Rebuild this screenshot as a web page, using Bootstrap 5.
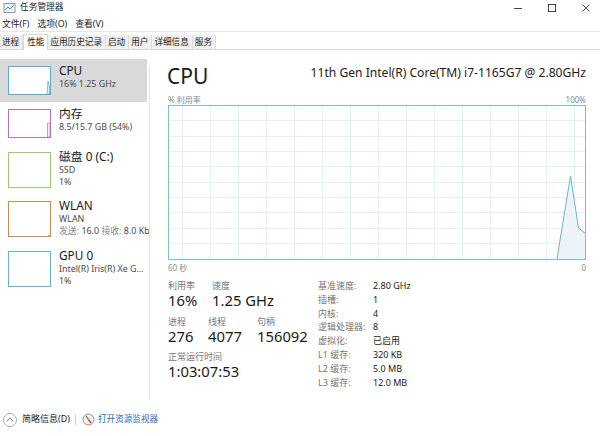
<!DOCTYPE html>
<html lang="zh-CN">
<head>
  <meta charset="UTF-8">
  <meta name="viewport" content="width=device-width, initial-scale=1.0">
  <title>任务管理器</title>
  <link href="https://cdn.jsdelivr.net/npm/bootstrap@5.3.0/dist/css/bootstrap.min.css" rel="stylesheet">
  <style>
    html, body { height: 100%; }
    body {
      width: 600px; height: 436px; overflow: hidden; background: #fff; color: #1a1a1a;
      font-family: "Noto Sans", "Noto Sans CJK SC", sans-serif; font-size: 9px; line-height: 1.2;
    }
    .title-row { height: 15px; padding-left: 3px; font-size: 8.7px; }
    .win-btns { gap: 26px; padding-right: 10px; }
    .menu-row { height: 17px; padding: 3px 0 0 2px; gap: 8px; font-size: 8.8px; border-bottom: 1px solid #e8e8e8; margin-bottom: 3px; }
    .tab-row { height: 15px; border-bottom: 1px solid #d9d9d9; }
    .tab-item { height: 14px; padding: 0 3px 0 2px; background: #f0f0f0; border-right: 1px solid #dcdcdc; font-size: 8.6px; line-height: 14px; }
    .tab-item.now { background: #fff; border: 1px solid #d9d9d9; border-bottom: 0; height: 16px; margin-top: -1px; padding: 0 3px; z-index: 1; }
    .side-list { width: 149px; padding-top: 9px; flex: none; }
    .side-rule { width: 1px; flex: none; height: 334px; margin-top: 16px; background: #e6e6e6; }
    .side-item { width: 149px; height: 49px; padding: 3px 0 0 8px; gap: 8px; white-space: nowrap; overflow: hidden; }
    .side-item.short { height: 43px; }
    .side-item.tall { height: 50px; }
    .side-item.now { width: 147px; background: #d9d9d9; }
    .thumb { width: 43px; height: 36px; flex: none; margin-top: 4px; background: #fff; border: 1px solid; }
    .side-item.short .thumb { height: 29px; }
    .thumb svg { display: block; width: 100%; height: 100%; }
    .thumb-cpu { border-color: #5aa9d6; }
    .thumb-mem { border-color: #b56fc9; }
    .thumb-disk { border-color: #9ccb6f; }
    .thumb-net { border-color: #d08a4f; }
    .thumb-gpu { border-color: #6bb0d8; }
    .side-name { font-size: 11.8px; line-height: 16px; }
    .side-sub { font-size: 8.9px; line-height: 12px; color: #4a4a4a; }
    .dim { color: #888; }
    .detail { padding: 12px 14px 0 17px; flex: 1; min-width: 0; }
    .cpu-title { font-size: 21px; line-height: 28px; }
    .cpu-model { font-size: 12.1px; line-height: 16px; margin-top: 3px; }
    .axis-note { font-size: 8px; color: #8a8a8a; line-height: 11px; margin-left: 1px; }
    .note-top { margin-top: 4px; }
    .note-bottom { margin-top: 2px; }
    .chart-box { height: 155px; width: 418px; margin-left: 1px; border: 1px solid #7fb9dc; }
    .chart-box svg { display: block; width: 100%; height: 100%; }
    .stat-wrap { margin: 7px 0 0 1px; }
    .stat-col { width: 150px; flex: none; }
    .stat-name { font-size: 9px; color: #777; line-height: 11px; }
    .stat-num { font-size: 14.8px; line-height: 18px; }
    .stat-group { margin-bottom: 6.5px; }
    .w-util { width: 44px; }
    .w-proc { width: 40px; }
    .w-thread { width: 49px; }
    .spec-list { margin-top: -1px; }
    .spec-row { line-height: 13.8px; font-size: 9px; }
    .spec-key { width: 55px; color: #777; flex: none; }
    .foot-row { padding: 3px 0 0 3px; height: 36px; font-size: 9px; }
    .foot-link { color: #1a6fc9; font-size: 8.6px; margin-left: 3px; }
    .foot-text { margin: 0 5px; }
    .foot-sep { width: 1px; height: 11px; margin-right: 6px; background: #ccc; }
  </style>
</head>
<body>
  <div class="title-row d-flex align-items-center justify-content-between">
    <div class="d-flex align-items-center gap-1">
      <svg width="13" height="12" viewBox="0 0 13 12"><rect x="1" y="1.5" width="11" height="9" fill="#eef4f8" stroke="#8a9aa6"/><path d="M2 8l3-3 2 2 4-4" fill="none" stroke="#3f8fc4"/></svg>
      <span>任务管理器</span>
    </div>
    <div class="win-btns d-flex align-items-center">
      <svg width="8" height="8" viewBox="0 0 8 8"><path d="M0 4.500h8" stroke="#444"/></svg>
      <svg width="8" height="8" viewBox="0 0 8 8"><rect x=".5" y=".5" width="7" height="7" fill="none" stroke="#444"/></svg>
      <svg width="8" height="8" viewBox="0 0 8 8"><path d="M.5.500l7 7M7.500.500l-7 7" stroke="#444"/></svg>
    </div>
  </div>
  <div class="menu-row d-flex align-items-center">
    <span>文件(F)</span><span>选项(O)</span><span>查看(V)</span>
  </div>
  <div class="tab-row d-flex">
    <div class="tab-item">进程</div>
    <div class="tab-item now">性能</div>
    <div class="tab-item">应用历史记录</div>
    <div class="tab-item">启动</div>
    <div class="tab-item">用户</div>
    <div class="tab-item">详细信息</div>
    <div class="tab-item">服务</div>
  </div>

  <div class="d-flex">
    <div class="side-list">
      <div class="side-item short now d-flex align-items-start">
        <div class="thumb thumb-cpu"><svg viewBox="0 0 41 27" preserveAspectRatio="none"><path d="M38 27l1-13 1.500 6v7z" fill="#e6f0f7" stroke="#7fb9dc"/></svg></div>
        <div><div class="side-name">CPU</div><div class="side-sub">16% 1.25 GHz</div></div>
      </div>
      <div class="side-item short d-flex align-items-start">
        <div class="thumb thumb-mem"><svg viewBox="0 0 41 27" preserveAspectRatio="none"><path d="M38.500 27V13H41v14z" fill="#f6eefa" stroke="#c79ad6"/></svg></div>
        <div><div class="side-name">内存</div><div class="side-sub">8.5/15.7 GB (54%)</div></div>
      </div>
      <div class="side-item d-flex align-items-start">
        <div class="thumb thumb-disk"></div>
        <div><div class="side-name">磁盘 0 (C:)</div><div class="side-sub">SSD</div><div class="side-sub">1%</div></div>
      </div>
      <div class="side-item tall d-flex align-items-start">
        <div class="thumb thumb-net"><svg viewBox="0 0 41 34" preserveAspectRatio="none"><path d="M39 34l1-2 1 2z" fill="#d08a4f"/></svg></div>
        <div><div class="side-name">WLAN</div><div class="side-sub">WLAN</div><div class="side-sub"><span class="dim">发送:</span> 16.0 <span class="dim">接收:</span> 8.0 Kbps</div></div>
      </div>
      <div class="side-item d-flex align-items-start">
        <div class="thumb thumb-gpu"></div>
        <div><div class="side-name">GPU 0</div><div class="side-sub">Intel(R) Iris(R) Xe G...</div><div class="side-sub">1%</div></div>
      </div>
    </div>
    <div class="side-rule"></div>

    <div class="detail">
      <div class="d-flex justify-content-between align-items-start">
        <div class="cpu-title">CPU</div>
        <div class="cpu-model">11th Gen Intel(R) Core(TM) i7-1165G7 @ 2.80GHz</div>
      </div>
      <div class="axis-note note-top d-flex justify-content-between"><span>% 利用率</span><span>100%</span></div>
      <div class="chart-box">
        <svg viewBox="0 0 416 153" preserveAspectRatio="none">
          <path d="M13.500 0V153M41.500 0V153M69.500 0V153M97.500 0V153M125.500 0V153M153.500 0V153M181.500 0V153M209.500 0V153M237.500 0V153M265.500 0V153M293.500 0V153M321.500 0V153M349.500 0V153M377.500 0V153M405.500 0V153M0 14.500H416M0 30.500H416M0 45.500H416M0 60.500H416M0 76.500H416M0 91.500H416M0 106.500H416M0 122.500H416M0 137.500H416" stroke="#e3f0f8" fill="none"/>
          <path d="M388 153L401.500 70L409.500 122L416 127V153Z" fill="#eef3f8" stroke="none"/>
          <path d="M388 153L401.500 70L409.500 122L416 127" stroke="#6fb2da" fill="none"/>
        </svg>
      </div>
      <div class="axis-note note-bottom d-flex justify-content-between"><span>60 秒</span><span>0</span></div>

      <div class="stat-wrap d-flex">
        <div class="stat-col">
          <div class="d-flex stat-group">
            <div class="w-util"><div class="stat-name">利用率</div><div class="stat-num">16%</div></div>
            <div><div class="stat-name">速度</div><div class="stat-num">1.25 GHz</div></div>
          </div>
          <div class="d-flex stat-group">
            <div class="w-proc"><div class="stat-name">进程</div><div class="stat-num">276</div></div>
            <div class="w-thread"><div class="stat-name">线程</div><div class="stat-num">4077</div></div>
            <div><div class="stat-name">句柄</div><div class="stat-num">156092</div></div>
          </div>
          <div><div class="stat-name">正常运行时间</div><div class="stat-num">1:03:07:53</div></div>
        </div>
        <div class="spec-list">
          <div class="spec-row d-flex"><span class="spec-key">基准速度:</span><span>2.80 GHz</span></div>
          <div class="spec-row d-flex"><span class="spec-key">插槽:</span><span>1</span></div>
          <div class="spec-row d-flex"><span class="spec-key">内核:</span><span>4</span></div>
          <div class="spec-row d-flex"><span class="spec-key">逻辑处理器:</span><span>8</span></div>
          <div class="spec-row d-flex"><span class="spec-key">虚拟化:</span><span>已启用</span></div>
          <div class="spec-row d-flex"><span class="spec-key">L1 缓存:</span><span>320 KB</span></div>
          <div class="spec-row d-flex"><span class="spec-key">L2 缓存:</span><span>5.0 MB</span></div>
          <div class="spec-row d-flex"><span class="spec-key">L3 缓存:</span><span>12.0 MB</span></div>
        </div>
      </div>
    </div>
  </div>

  <div class="foot-row d-flex align-items-center">
    <svg width="14" height="14" viewBox="0 0 14 14"><circle cx="7" cy="7" r="6.500" fill="none" stroke="#aaa"/><path d="M3.500 8.500L7 5l3.500 3.500" fill="none" stroke="#888"/></svg>
    <span class="foot-text">简略信息(D)</span>
    <span class="foot-sep"></span>
    <svg width="13" height="13" viewBox="0 0 13 13"><circle cx="6.500" cy="6.500" r="5.500" fill="#f4f0ea" stroke="#9a8f84"/><path d="M4 3l2.500 3.500" stroke="#8a8a8a" stroke-width="1.400"/><path d="M6.500 6.500L9 10" stroke="#c8453b" stroke-width="1.400"/></svg>
    <span class="foot-link">打开资源监视器</span>
  </div>
</body>
</html>
